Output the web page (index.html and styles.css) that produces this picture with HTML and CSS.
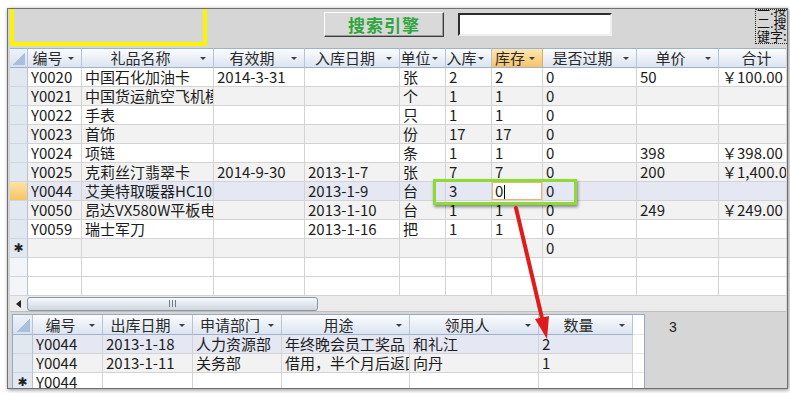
FILE: index.html
```html
<!DOCTYPE html>
<html lang="zh-CN">
<head>
    <meta charset="UTF-8">
    <title>礼品库存</title>
    <link rel="stylesheet" href="styles.css">
</head>
<body>
    <div class="window">
        <div class="toolbar">
            <div class="banner"></div>
            <button class="search-btn">搜索引擎</button>
            <input class="search-box" type="text">
            <div class="hint">
                <div class="hint-text">一.按<br>二.搜<br>键字:</div>
            </div>
        </div>

        <!-- 礼品主表 -->
        <div class="sheet">
            <div class="row head">
                <div class="corner"></div>
                <div class="hd"><span>编号</span><i></i></div>
                <div class="hd"><span>礼品名称</span><i></i></div>
                <div class="hd"><span>有效期</span><i></i></div>
                <div class="hd"><span>入库日期</span><i></i></div>
                <div class="hd"><span>单位</span><i></i></div>
                <div class="hd"><span>入库</span><i></i></div>
                <div class="hd sorted"><span>库存</span><i></i></div>
                <div class="hd"><span>是否过期</span><i></i></div>
                <div class="hd"><span>单价</span><i></i></div>
                <div class="hd"><span>合计</span><i></i></div>
            </div>
            <div class="row">
                <div class="sel"></div><div>Y0020</div><div>中国石化加油卡</div><div>2014-3-31</div><div></div>
                <div>张</div><div>2</div><div>2</div><div>0</div><div>50</div><div>￥100.00</div>
            </div>
            <div class="row alt">
                <div class="sel"></div><div>Y0021</div><div>中国货运航空飞机模型</div><div></div><div></div>
                <div>个</div><div>1</div><div>1</div><div>0</div><div></div><div></div>
            </div>
            <div class="row">
                <div class="sel"></div><div>Y0022</div><div>手表</div><div></div><div></div>
                <div>只</div><div>1</div><div>1</div><div>0</div><div></div><div></div>
            </div>
            <div class="row alt">
                <div class="sel"></div><div>Y0023</div><div>首饰</div><div></div><div></div>
                <div>份</div><div>17</div><div>17</div><div>0</div><div></div><div></div>
            </div>
            <div class="row">
                <div class="sel"></div><div>Y0024</div><div>项链</div><div></div><div></div>
                <div>条</div><div>1</div><div>1</div><div>0</div><div>398</div><div>￥398.00</div>
            </div>
            <div class="row alt">
                <div class="sel"></div><div>Y0025</div><div>克莉丝汀翡翠卡</div><div>2014-9-30</div><div>2013-1-7</div>
                <div>张</div><div>7</div><div>7</div><div>0</div><div>200</div><div>￥1,400.00</div>
            </div>
            <div class="row cur">
                <div class="sel"></div><div>Y0044</div><div>艾美特取暖器HC1036</div><div></div><div>2013-1-9</div>
                <div>台</div><div>3</div><div class="editing">0<span class="caret"></span></div><div>0</div><div></div><div></div>
            </div>
            <div class="row alt">
                <div class="sel"></div><div>Y0050</div><div>昂达VX580W平板电脑</div><div></div><div>2013-1-10</div>
                <div>台</div><div>1</div><div>1</div><div>0</div><div>249</div><div>￥249.00</div>
            </div>
            <div class="row">
                <div class="sel"></div><div>Y0059</div><div>瑞士军刀</div><div></div><div>2013-1-16</div>
                <div>把</div><div>1</div><div>1</div><div>0</div><div></div><div></div>
            </div>
            <div class="row alt">
                <div class="sel star">✱</div><div></div><div></div><div></div><div></div>
                <div></div><div></div><div></div><div>0</div><div></div><div></div>
            </div>
            <div class="row blank">
                <div class="sel"></div><div></div><div></div><div></div><div></div>
                <div></div><div></div><div></div><div></div><div></div><div></div>
            </div>
            <div class="row blank">
                <div class="sel"></div><div></div><div></div><div></div><div></div>
                <div></div><div></div><div></div><div></div><div></div><div></div>
            </div>
            <div class="hscroll">
                <div class="hs-left"></div>
                <div class="hs-thumb"></div>
            </div>
        </div>

        <!-- 出库明细子表 -->
        <div class="lower">
            <div class="subform">
                <div class="row head">
                    <div class="corner"></div>
                    <div class="hd"><span>编号</span><i></i></div>
                    <div class="hd"><span>出库日期</span><i></i></div>
                    <div class="hd"><span>申请部门</span><i></i></div>
                    <div class="hd"><span>用途</span><i></i></div>
                    <div class="hd"><span>领用人</span><i></i></div>
                    <div class="hd"><span>数量</span><i></i></div>
                    <div class="pad"></div>
                </div>
                <div class="row cur">
                    <div class="sel"></div><div>Y0044</div><div>2013-1-18</div><div>人力资源部</div>
                    <div>年终晚会员工奖品</div><div>和礼江</div><div>2</div><div class="pad"></div>
                </div>
                <div class="row alt">
                    <div class="sel"></div><div>Y0044</div><div>2013-1-11</div><div>关务部</div>
                    <div>借用，半个月后返回</div><div>向丹</div><div>1</div><div class="pad"></div>
                </div>
                <div class="row">
                    <div class="sel star">✱</div><div>Y0044</div><div></div><div></div>
                    <div></div><div></div><div></div><div class="pad"></div>
                </div>
            </div>
            <div class="count">3</div>
        </div>
    </div>

    <div class="callout"></div>
    <svg class="arrow" width="790" height="393" viewBox="0 0 790 393">
        <line x1="516" y1="208" x2="542" y2="318" stroke="#e01b1b" stroke-width="4" stroke-linecap="round"/>
        <polygon points="547,339 535,319 549,316" fill="#e01b1b"/>
    </svg>
</body>
</html>
```

FILE: styles.css
```css
:root {
    --form-bg: #d6d6d6;
    --grid-line: #d3d3d3;
    --head-line: #b6c4d6;
    --sel-bg: #e2e8f0;
    --alt-bg: #f2f2f2;
    --cur-bg: #e5e7f3;
}
* {
    box-sizing: border-box;
}
body {
    margin: 0;
    padding: 8px 0 0 7px;
    width: 790px;
    height: 393px;
    overflow: hidden;
    position: relative;
    background: #fff;
    font-family: "Noto Sans CJK SC", sans-serif;
    font-size: 15px;
    color: #1c1c1c;
}
.window {
    width: 781px;
    height: 381px;
    border: 1px solid #707070;
    background: var(--form-bg);
    box-shadow: 1px 1px 4px rgba(0,0,0,0.45);
    overflow: hidden;
}

/* 顶部搜索栏 */
.toolbar {
    display: flex;
    align-items: flex-start;
    height: 39px;
    padding-left: 2px;
}
.banner {
    flex: none;
    width: 197px;
    height: 37px;
    border: 4px solid #fbf300;
    border-top: 0;
}
.search-btn {
    flex: none;
    margin: 3px 0 0 117px;
    width: 120px;
    height: 25px;
    padding: 0;
    border: 1px solid;
    border-color: #fdfdfd #3c3c3c #3c3c3c #fdfdfd;
    box-shadow: inset -1px -1px 0 #9a9a9a;
    background: #d9d9d9;
    font-family: inherit;
    font-size: 17px;
    font-weight: bold;
    color: #2fa63a;
    letter-spacing: 1px;
    line-height: 22px;
}
.search-box {
    flex: none;
    margin: 4px 0 0 14px;
    width: 154px;
    height: 23px;
    padding: 0;
    border: 2px solid;
    border-color: #2e2e2e #efefef #efefef #2e2e2e;
    background: #fff;
}
.hint {
    flex: none;
    margin-left: 143px;
    width: 40px;
    height: 35px;
    border: 1px dotted #222;
    overflow: hidden;
    padding-left: 1px;
    font-size: 13px;
    line-height: 13px;
    white-space: nowrap;
    color: #111;
}
.hint-text {
    margin-top: -7px;
}

/* 数据表 */
.sheet {
    margin-left: 2px;
    width: 776px;
    overflow: hidden;
    background: #fff;
}
.row {
    display: grid;
    grid-template-columns: 18px 54px 132px 91px 95px 46px 46px 51px 94px 82px 90px;
    height: 19px;
}
.row > div {
    border-right: 1px solid var(--grid-line);
    border-bottom: 1px solid var(--grid-line);
    padding: 0 3px;
    line-height: 18px;
    white-space: nowrap;
    overflow: hidden;
    background: #fff;
}
.row.alt > div {
    background: var(--alt-bg);
}
.row.cur > div {
    background: var(--cur-bg);
}
.row > .sel,
.row.alt > .sel,
.subform .row.cur > .sel {
    background: var(--sel-bg);
    border-right-color: #b7c3d3;
    border-bottom-color: #cdd6e2;
    padding: 0;
    text-align: center;
}
.sheet .row.cur > .sel {
    background: linear-gradient(#fde3a6, #f7c463);
}
.row.blank > .sel {
    background: #f3f5f8;
}
.row > .star {
    font-family: "DejaVu Sans", sans-serif;
    font-size: 12px;
    font-weight: bold;
    color: #222;
}
.row.cur > .editing {
    background: #fff;
    box-shadow: inset 0 0 0 1px #efb271;
}
.caret {
    display: inline-block;
    width: 1px;
    height: 14px;
    margin-left: 1px;
    background: #000;
    vertical-align: -2px;
}

.row.head {
    height: 20px;
}
.row.head > div {
    display: flex;
    align-items: center;
    padding: 0;
    border-top: 1px solid #9fb2cb;
    border-bottom-color: #9fb2cb;
    border-right-color: var(--head-line);
    background: linear-gradient(#fbfcfe, #dbe4f0);
    color: #2a2a2a;
}
.hd span {
    flex: 1;
    text-align: center;
    overflow: hidden;
}
.hd i {
    flex: none;
    margin: 1px 7px 0 1px;
    border: 3px solid transparent;
    border-top-color: #3d3d3d;
    border-bottom: 0;
}
.row.head > .sorted {
    background: linear-gradient(#fde6b2, #f6c36a);
    border-right-color: #dcae62;
}
.row.head > .corner {
    justify-content: flex-end;
    align-items: flex-end;
    padding: 0 2px 2px 0;
    background: linear-gradient(#eef3f9, #d7e1ee);
}
.corner::after {
    content: "";
    width: 13px;
    height: 13px;
    background: linear-gradient(to bottom right, transparent 50%, #a9bfdd 50%);
}

/* 水平滚动条 */
.hscroll {
    display: flex;
    align-items: center;
    height: 16px;
    background: #ececec;
    border-bottom: 1px solid #bdbdbd;
}
.hs-left {
    flex: none;
    width: 17px;
    height: 100%;
    display: flex;
    align-items: center;
    justify-content: center;
}
.hs-left::before {
    content: "";
    border: 4px solid transparent;
    border-right: 5px solid #222;
    border-left: 0;
}
.hs-thumb {
    flex: none;
    width: 291px;
    height: 14px;
    border: 1px solid #8796a8;
    border-radius: 3px;
    background: linear-gradient(#f7f9fb, #e3e8ee 50%, #cfd6df);
    display: flex;
    align-items: center;
    justify-content: center;
}
.hs-thumb::before {
    content: "";
    width: 7px;
    height: 7px;
    background: repeating-linear-gradient(to right, #6d7b8c 0 1px, transparent 1px 3px);
}

/* 子表 */
.lower {
    display: flex;
    align-items: flex-start;
    margin-top: 2px;
    padding-left: 4px;
}
.subform {
    flex: none;
    width: 633px;
    border: 1px solid #98a8bd;
    border-bottom: 0;
    background: #fff;
}
.subform .row {
    grid-template-columns: 20px 70px 90px 89px 128px 129px 94px 11px;
}
.subform .row.head > div {
    border-top: 0;
}
.subform .row > .pad,
.subform .row.head > .pad {
    background: #fff;
    border-right: 0;
    border-bottom-color: #e4e4e4;
}
.count {
    margin: 5px 0 0 24px;
    font-family: "Liberation Sans", sans-serif;
    font-size: 14px;
    line-height: 16px;
    color: #222;
}

/* 标注 */
.callout {
    position: absolute;
    left: 433px;
    top: 179px;
    width: 144px;
    height: 26px;
    border: 3px solid #8cdc34;
    box-shadow: 1px 2px 3px rgba(0,0,0,0.45);
}
.arrow {
    position: absolute;
    left: 0;
    top: 0;
    pointer-events: none;
}
```
